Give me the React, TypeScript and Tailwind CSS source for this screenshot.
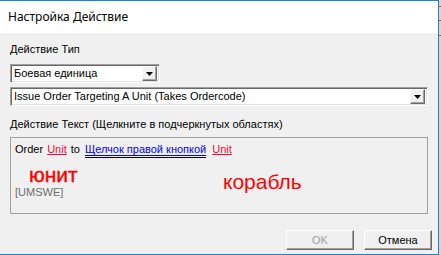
import React from "react";

const sans = { fontFamily: '"Liberation Sans", Arial, sans-serif' };

function DropButton() {
  return (
    <div className="w-[15px] h-[15px] bg-[#f0f0f0] border border-t-white border-l-white border-b-[#696969] border-r-[#696969] shadow-[inset_-1px_-1px_0_#a0a0a0] flex items-center justify-center">
      <svg width="7" height="4" viewBox="0 0 7 4">
        <path d="M0 0H7L3.5 4Z" fill="#000" />
      </svg>
    </div>
  );
}

function Combo({ width, text }: { width: string; text: string }) {
  return (
    <div
      className={`${width} h-[19px] bg-white border border-t-[#a0a0a0] border-l-[#a0a0a0] border-b-white border-r-white shadow-[inset_1px_1px_0_#696969,inset_-1px_-1px_0_#e3e3e3] flex items-center pl-[3px] pr-[2px]`}
    >
      <span className="flex-1 text-[11px] leading-[13px] text-black whitespace-nowrap overflow-hidden">{text}</span>
      <DropButton />
    </div>
  );
}

function Btn({ label, disabled }: { label: string; disabled?: boolean }) {
  return (
    <div
      className={`w-[68px] h-[20px] bg-[#f0f0f0] border border-t-white border-l-white border-b-[#696969] border-r-[#696969] shadow-[inset_-1px_-1px_0_#a0a0a0] flex items-center justify-center text-[11px] leading-[13px] ${
        disabled ? "text-[#a0a0a0]" : "text-black"
      }`}
    >
      {label}
    </div>
  );
}

export default function App() {
  return (
    <div className="w-[441px] h-[255px] flex bg-[#f0f0f0] overflow-hidden" style={sans}>
      <div className="w-[439px] h-[255px] flex flex-col border-t border-r border-b border-[#1883d7]">
        <div
          className="h-[32px] bg-white flex items-center pl-[8px] text-[12px] text-black"
          style={{ fontFamily: '"Noto Sans", "Open Sans", sans-serif' }}
        >
          Настройка Действие
        </div>
        <div className="flex-1 bg-[#f0f0f0] pl-[10px] pt-[10px] flex flex-col text-[11px] leading-[13px] text-black">
          <div>Действие Тип</div>
          <div className="mt-[8px]">
            <Combo width="w-[150px]" text="Боевая единица" />
          </div>
          <div className="mt-[4px]">
            <Combo width="w-[418px]" text="Issue Order Targeting A Unit (Takes Ordercode)" />
          </div>
          <div className="mt-[12px]">Действие Текст (Щелкните в подчеркнутых областях)</div>
          <div className="relative mt-[6px] w-[418px] h-[77px] border border-[#a0a0a0] bg-[#f0f0f0] px-[4px] pt-[5px] flex flex-col">
            <div className="flex items-start whitespace-nowrap">
              <span>Order</span>
              <span className="ml-[4px] text-[#ee0a3c] underline decoration-[#ee0a3c] underline-offset-[1px]">Unit</span>
              <span className="ml-[4px]">to</span>
              <span className="ml-[5px] inline-block h-[15px] border-b border-black">
                <span className="text-[#0000ff] underline decoration-[#0000ff] underline-offset-[2px]">Щелчок правой кнопкой</span>
              </span>
              <span className="ml-[6px] text-[#ee0a3c] underline decoration-[#ee0a3c] underline-offset-[1px]">Unit</span>
            </div>
            <div className="mt-[28px] text-[#6d6d6d]">[UMSWE]</div>
            <span className="absolute left-[18px] top-[25px] text-[21px] leading-[24px] text-[#ff0000] [-webkit-text-stroke:0.4px_#ff0000]">юнит</span>
            <span className="absolute left-[212px] top-[32px] text-[21px] leading-[24px] text-[#ff0000]">корабль</span>
          </div>
          <div className="mt-[16px] flex gap-[10px] pl-[276px]">
            <Btn label="OK" disabled />
            <Btn label="Отмена" />
          </div>
        </div>
      </div>
      <div className="w-[2px] h-[255px] bg-[#d6d6d6] flex flex-col">
        <div className="h-[6px]" />
        <div className="h-[1px] bg-[#6d6d6d]" />
        <div className="h-[13px]" />
        <div className="h-[1px] bg-[#6d6d6d]" />
        <div className="h-[14px]" />
        <div className="h-[1px] bg-[#6d6d6d]" />
      </div>
    </div>
  );
}
